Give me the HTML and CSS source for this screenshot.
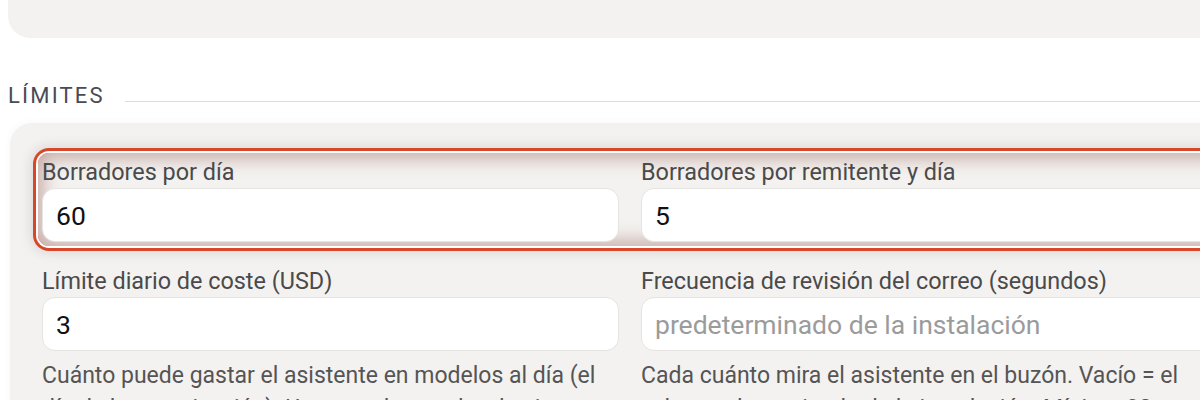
FILE: index.html
```html
<!DOCTYPE html>
<html lang="es">
<head>
<meta charset="utf-8">
<title>Límites</title>
<link rel="stylesheet" href="styles.css">
</head>
<body>
<div class="page">
  <div class="card card-top"></div>

  <div class="section-head">
    <h2 class="section-title">Límites</h2>
    <span class="section-rule"></span>
  </div>

  <div class="card card-limits">
    <div class="row highlight">
      <div class="field">
        <label class="label">Borradores por día</label>
        <input class="input" type="text" value="60">
      </div>
      <div class="field">
        <label class="label">Borradores por remitente y día</label>
        <input class="input" type="text" value="5">
      </div>
    </div>
    <div class="row">
      <div class="field">
        <label class="label">Límite diario de coste (USD)</label>
        <input class="input" type="text" value="3">
        <p class="help">Cuánto puede gastar el asistente en modelos al día (el día de la organización). Una vez alcanzado, el asistente se detiene.</p>
      </div>
      <div class="field">
        <label class="label">Frecuencia de revisión del correo (segundos)</label>
        <input class="input" type="text" placeholder="predeterminado de la instalación">
        <p class="help">Cada cuánto mira el asistente en el buzón. Vacío = el valor predeterminado de la instalación. Mínimo 30 segundos.</p>
      </div>
    </div>
  </div>
</div>
</body>
</html>
```

FILE: styles.css
```css
html, body {
  margin: 0;
  padding: 0;
  background: #ffffff;
  overflow: hidden;
}

body {
  font-family: Roboto, "Liberation Sans", Arial, sans-serif;
  color: #333;
}

.page {
  width: 1250px;
  padding-left: 8px;
}

.card {
  background: #f3f2f0;
  border-radius: 22px;
}

.card-top {
  height: 38px;
  border-top-left-radius: 0;
  border-top-right-radius: 0;
}

.section-head {
  display: flex;
  align-items: center;
  gap: 20px;
  margin-top: 40px;
  height: 38px;
}

.section-title {
  margin: 0;
  font-size: 22px;
  font-weight: 400;
  letter-spacing: 2.2px;
  text-transform: uppercase;
  color: #4a4a54;
  line-height: 38px;
  position: relative;
  top: -1px;
}

.section-rule {
  flex: 1;
  height: 1px;
  background: #dcdcdc;
  margin-top: 9px;
}

.card-limits {
  margin-top: 7px;
  margin-left: 2px;
  padding: 34px 32px 20px 32px;
  box-shadow: 0 0 8px rgba(0, 0, 0, 0.04);
}

.row {
  display: grid;
  grid-template-columns: 577px 577px;
  column-gap: 22px;
}

.row + .row {
  margin-top: 24px;
}

.highlight {
  margin: -4px;
  padding: 4px;
  border-radius: 11px;
  box-shadow:
    inset 0 0 18px 5px rgba(130, 60, 50, 0.40),
    0 0 0 2px #ffffff,
    0 0 0 5px #d9472b,
    0 0 12px 8px rgba(0, 0, 0, 0.09);
}

.field {
  display: flex;
  flex-direction: column;
}

.label {
  font-size: 23.4px;
  font-weight: 400;
  line-height: 31px;
  color: #4a4a4a;
}

.input {
  box-sizing: border-box;
  height: 54px;
  width: 100%;
  margin: 0;
  padding: 0 13px;
  border: 1px solid #e6e4e0;
  border-radius: 13px;
  background: #ffffff;
  font-family: Roboto, "Liberation Sans", Arial, sans-serif;
  font-size: 26.5px;
  color: #111;
  outline: none;
}

.input::placeholder {
  color: #9b9b9b;
}

.help {
  margin: 8px 0 0 0;
  font-size: 23px;
  line-height: 33px;
  color: #555;
}
```
